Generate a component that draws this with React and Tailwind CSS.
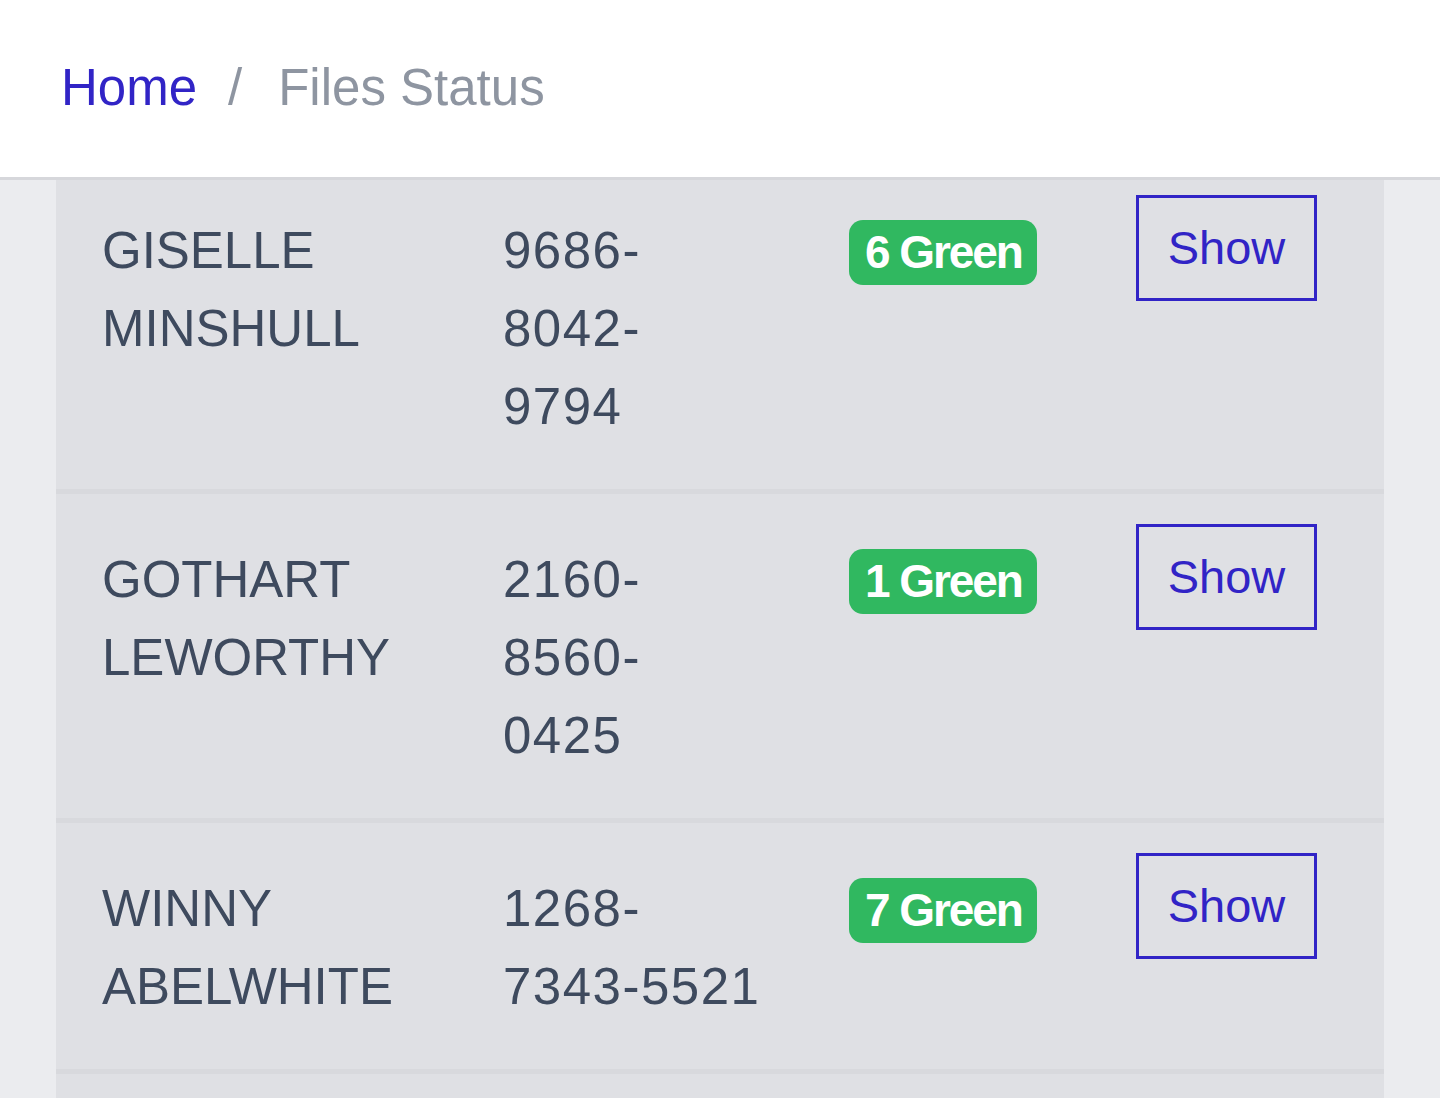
const rows = [
  { first: "GISELLE", last: "MINSHULL", phone: ["9686-", "8042-", "9794"], count: 6 },
  { first: "GOTHART", last: "LEWORTHY", phone: ["2160-", "8560-", "0425"], count: 1 },
  { first: "WINNY", last: "ABELWHITE", phone: ["1268-", "7343-5521"], count: 7 },
  { first: "", last: "", phone: [""], count: null },
]

function Row({ row }) {
  return (
    <div className="flex items-start py-[30px] border-b-[5px] border-[#d8d9dd]">
      <div className="w-[447px] pl-[46px] pt-[17px] pb-[13px] text-[51px] leading-[78px] text-[#3e4a5e]">
        <div>{row.first}</div>
        <div>{row.last}</div>
      </div>
      <div className="w-[346px] pt-[17px] pb-[13px] text-[51px] leading-[78px] tracking-[1.5px] text-[#3e4a5e]">
        {row.phone.map((p, i) => (
          <div key={i}>{p}</div>
        ))}
      </div>
      <div className="w-[287px] pt-[25px]">
        {row.count !== null && (
          <span className="inline-flex items-center h-[65px] pl-[16px] pr-[15px] rounded-[14px] bg-[#30b860] text-white text-[46px] font-semibold tracking-[-0.045em]">
            {row.count} Green
          </span>
        )}
      </div>
      <div>
        {row.count !== null && (
          <button className="flex items-center justify-center w-[181px] h-[106px] border-[3px] border-[#3124c6] text-[#3124c6] text-[47px]">
            Show
          </button>
        )}
      </div>
    </div>
  )
}

export default function App() {
  return (
    <div className="h-[1098px] overflow-hidden bg-[#ebecef] font-['Liberation_Sans',Arial,sans-serif]">
      <header className="relative z-10 flex items-center h-[180px] pl-[61px] bg-white border-b-[3px] border-[#d6d7db] text-[51px]">
        <span className="text-[#3124c6]">Home</span>
        <span className="ml-[31px] mr-[36px] text-[#8e95a1]">/</span>
        <span className="text-[#8e95a1]">Files Status</span>
      </header>
      <main className="-mt-[15px] mx-[56px] bg-[#dfe0e4]">
        {rows.map((row, i) => (
          <Row key={i} row={row} />
        ))}
      </main>
    </div>
  )
}
